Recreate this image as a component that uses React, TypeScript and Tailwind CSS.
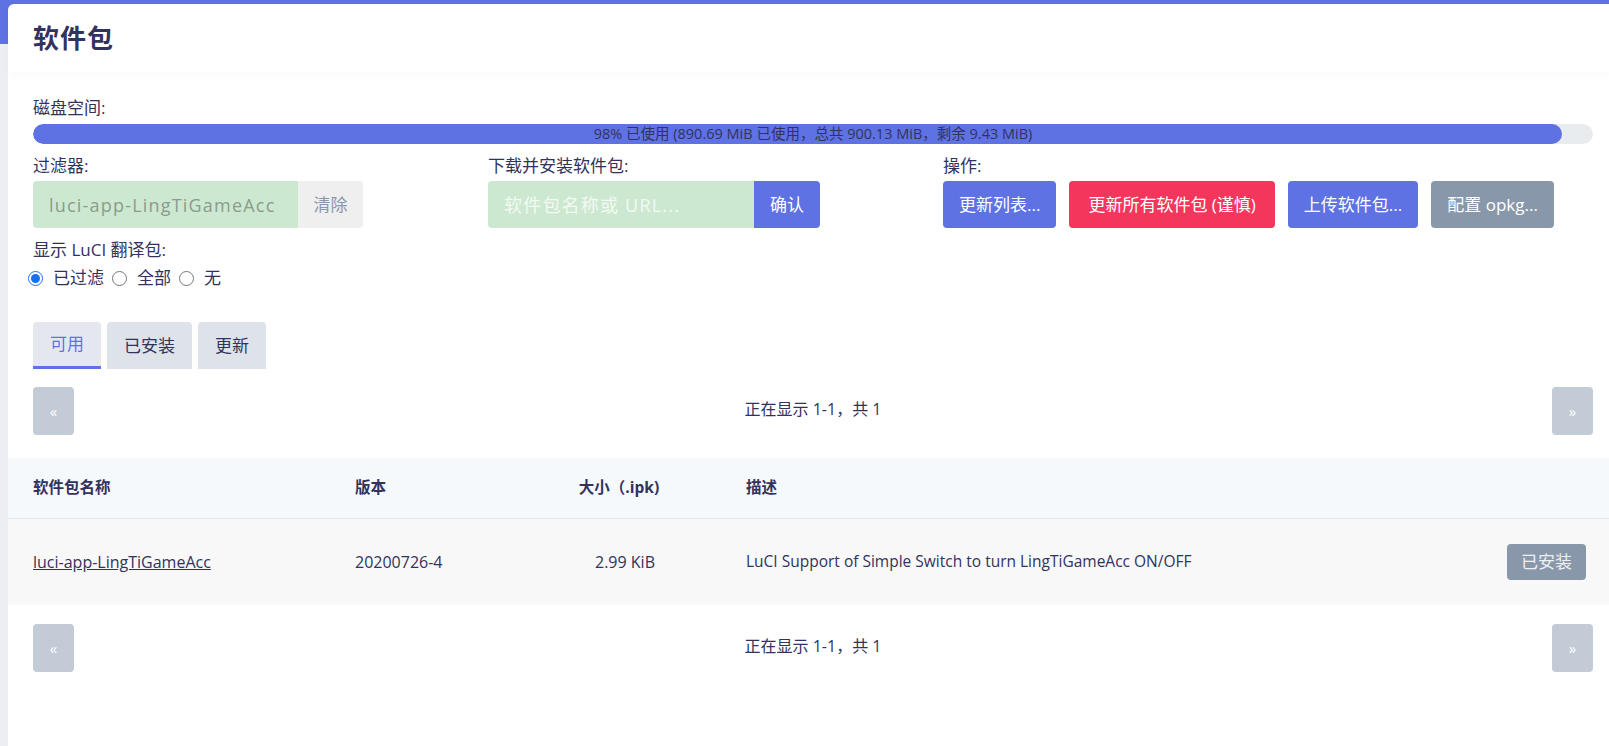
import { useState } from "react";

const tabs = ["可用", "已安装", "更新"];

function Pager() {
	return (
		<div className="flex items-center justify-between">
			<button className="w-[41px] h-[48px] rounded-[4px] bg-[#c3cbd6] text-white text-[15px]">«</button>
			<div className="text-[16px] text-[#32325d] -mt-[4px]">正在显示 1-1，共 1</div>
			<button className="w-[41px] h-[48px] rounded-[4px] bg-[#c3cbd6] text-white text-[15px]">»</button>
		</div>
	)
}

export default function App() {
	const [tab, setTab] = useState(0);
	const [mode, setMode] = useState("filtered");

	return (
		<div className="min-h-screen bg-[#eceef3] font-['Open_Sans','Noto_Sans_CJK_SC',sans-serif] text-[#32325d]">
			<div className="h-[44px] bg-[#5e72e4]"></div>
			<div className="-mt-[40px] ml-[8px] bg-white rounded-tl-[6px] min-h-[742px]">
				<div className="h-[68px] flex items-center px-[25px] shadow-[0_4px_10px_rgba(0,0,0,0.025)]">
					<h2 className="text-[26px] font-bold text-[#32325d] tracking-[1px]">软件包</h2>
				</div>

				<div className="pl-[25px] pr-[16px] pt-[24px]">
					<div className="text-[17px] leading-[24px]">磁盘空间:</div>
					<div className="mt-[4px] h-[20px] rounded-full bg-[#e9ecef] relative overflow-hidden">
						<div className="h-full rounded-full bg-[#5e72e4]" style={{ width: "98%" }}></div>
						<div className="absolute inset-0 flex items-center justify-center text-[14.5px] text-[#32325d]">
							98% 已使用 (890.69 MiB 已使用，总共 900.13 MiB，剩余 9.43 MiB)
						</div>
					</div>

					<div className="mt-[10px] grid grid-cols-[455px_455px_1fr]">
						<div>
							<div className="text-[17px] leading-[24px]">过滤器:</div>
							<div className="mt-[3px] flex h-[47px]">
								<input
									className="w-[265px] h-full bg-[#cde8d0] rounded-l-[4px] px-[16px] text-[18px] tracking-[1.2px] text-[#8a9c8e] outline-none"
									defaultValue="luci-app-LingTiGameAcc"
								/>
								<button className="w-[65px] h-full bg-[#efefef] rounded-r-[4px] text-[17px] text-[#8898aa]">清除</button>
							</div>
						</div>
						<div>
							<div className="text-[17px] leading-[24px]">下载并安装软件包:</div>
							<div className="mt-[3px] flex h-[47px]">
								<input
									className="w-[266px] h-full bg-[#cde8d0] rounded-l-[4px] px-[16px] text-[18px] tracking-[1.2px] outline-none placeholder:text-[#f2faf3] placeholder:opacity-100"
									placeholder="软件包名称或 URL..."
								/>
								<button className="w-[66px] h-full bg-[#5e72e4] rounded-r-[4px] text-[17px] text-white">确认</button>
							</div>
						</div>
						<div>
							<div className="text-[17px] leading-[24px]">操作:</div>
							<div className="mt-[3px] flex gap-[13px]">
								<button className="h-[47px] px-[16px] rounded-[4px] bg-[#5e72e4] text-white text-[17px]">更新列表...</button>
								<button className="h-[47px] px-[19px] rounded-[4px] bg-[#f5365c] text-white text-[17px]">更新所有软件包 (谨慎)</button>
								<button className="h-[47px] px-[16px] rounded-[4px] bg-[#5e72e4] text-white text-[17px]">上传软件包...</button>
								<button className="h-[47px] px-[16px] rounded-[4px] bg-[#8898aa] text-white text-[17px]">配置 opkg...</button>
							</div>
						</div>
					</div>

					<div className="mt-[10px] text-[17px] leading-[24px]">显示 LuCI 翻译包:</div>
					<div className="mt-[4px] -ml-[5px] flex items-center h-[24px] text-[17px]">
						<label className="flex items-center">
							<input type="radio" name="i18n" checked={mode === "filtered"} onChange={() => setMode("filtered")} className="w-[15px] h-[15px] m-0 accent-[#1a6ef5]" />
							<span className="ml-[10px]">已过滤</span>
						</label>
						<label className="flex items-center">
							<input type="radio" name="i18n" checked={mode === "all"} onChange={() => setMode("all")} className="w-[15px] h-[15px] m-0 ml-[8px] accent-[#1a6ef5]" />
							<span className="ml-[10px]">全部</span>
						</label>
						<label className="flex items-center">
							<input type="radio" name="i18n" checked={mode === "none"} onChange={() => setMode("none")} className="w-[15px] h-[15px] m-0 ml-[8px] accent-[#1a6ef5]" />
							<span className="ml-[10px]">无</span>
						</label>
					</div>

					<div className="mt-[32px] flex gap-[6px]">
						{tabs.map((t, i) => (
							<button
								key={t}
								onClick={() => setTab(i)}
								className={`h-[47px] px-[17px] rounded-t-[4px] text-[17px] ${tab === i ? "bg-[#e4e8ee] text-[#5e72e4] border-b-[3px] border-[#5e72e4]" : "bg-[#dde3e9] text-[#32325d]"}`}
							>
								{t}
							</button>
						))}
					</div>

					<div className="mt-[18px]">
						<Pager />
					</div>
				</div>

				<div className="mt-[23px]">
					<div className="flex items-center h-[61px] bg-[#f6f9fc] border-b border-[#e3e7ec] text-[15.5px] font-bold text-[#32325d]">
						<div className="w-[322px] pl-[25px]">软件包名称</div>
						<div className="w-[230px] pl-[25px]">版本</div>
						<div className="w-[130px] text-center pr-[12px]">大小（.ipk)</div>
						<div className="flex-1 pl-[56px]">描述</div>
					</div>
					<div className="flex items-center h-[86px] bg-[#f8f8f8] text-[16px] text-[#32325d]">
						<div className="w-[322px] pl-[25px]"><a href="#" className="underline">luci-app-LingTiGameAcc</a></div>
						<div className="w-[230px] pl-[25px]">20200726-4</div>
						<div className="w-[130px] text-center">2.99 KiB</div>
						<div className="flex-1 pl-[56px] text-[15.5px]">LuCI Support of Simple Switch to turn LingTiGameAcc ON/OFF</div>
						<div className="pr-[23px]">
							<button className="h-[36px] w-[79px] rounded-[4px] bg-[#8898aa] text-[#eef0f3] text-[17px]">已安装</button>
						</div>
					</div>
				</div>

				<div className="pl-[25px] pr-[16px] mt-[19px]">
					<Pager />
				</div>
			</div>
		</div>
	)
}
